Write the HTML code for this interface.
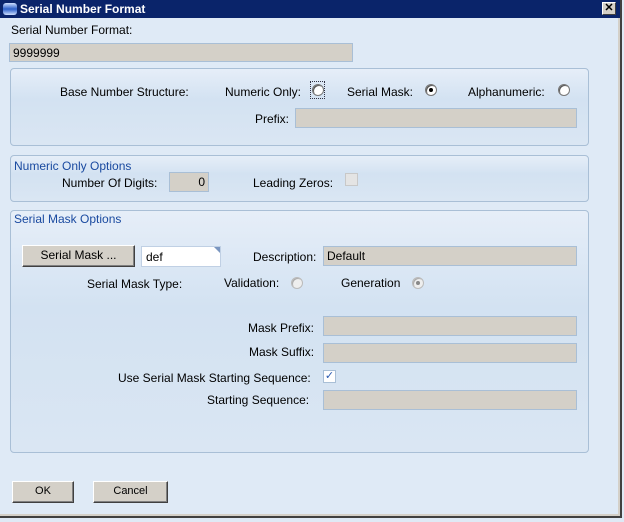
<!DOCTYPE html>
<html><head><style>
*{box-sizing:border-box;margin:0;padding:0}
body{width:624px;height:522px;overflow:hidden;background:#dfe9f5;font-family:"Liberation Sans",sans-serif;font-size:12px;color:#000;position:relative}
.a{position:absolute;white-space:nowrap}
.dlg{position:absolute;left:0;top:0;width:622px;height:518px;background:#dfeaf6;border-right:2px solid #404040;border-bottom:2px solid #404040;box-shadow:inset -2px -2px 0 #d4d0c8}
.title{position:absolute;left:0;top:0;width:620px;height:18px;background:#0a246a;color:#fff;font-weight:bold;font-size:12px;line-height:18px;padding-left:20px}
.inp{position:absolute;background:#d4d0c8;border:1px solid #a9bfd6;height:20px;line-height:18px;padding-left:3px}
.grp{position:absolute;border:1px solid #a9bfd6;border-radius:4px;background:linear-gradient(#e6eef8,#d3e2f2 40%,#dae6f3)}
.gt{color:#1a4aa0}
.rad{position:absolute;width:12px;height:12px;border-radius:50%;background:#fff;border:1px solid #777;box-shadow:inset 1px 1px 0 #555}
.btn{position:absolute;background:#d4d0c8;border:1px solid #fff;border-right-color:#404040;border-bottom-color:#404040;box-shadow:inset -1px -1px 0 #808080;text-align:center;line-height:19px}
</style></head><body>
<div class="dlg"></div>
<div class="title">Serial Number Format
<div class="a" style="left:3px;top:3px;width:14px;height:12px;border-radius:3px;background:linear-gradient(#cfe0ff,#2a5ec8 50%,#cfe0ff)"></div>
<div class="a" style="left:602px;top:2px;width:14px;height:13px;background:#d4d0c8;border:1px solid #fff;border-right-color:#404040;border-bottom-color:#404040;color:#000;font-size:11px;line-height:11px;text-align:center">✕</div>
</div>
<div class="a" style="left:11px;top:23px">Serial Number Format:</div>
<div class="inp" style="left:9px;top:43px;width:344px;height:19px">9999999</div>

<div class="grp" style="left:10px;top:68px;width:579px;height:78px"></div>
<div class="a" style="left:60px;top:85px">Base Number Structure:</div>
<div class="a" style="left:225px;top:85px">Numeric Only:</div>
<div class="a" style="left:310px;top:81px;width:15px;height:18px;border:1px dotted #334"></div>
<div class="rad" style="left:312px;top:84px"></div>
<div class="a" style="left:347px;top:85px">Serial Mask:</div>
<div class="rad" style="left:425px;top:84px"></div><div class="a" style="left:429px;top:88px;width:4px;height:4px;background:#000;border-radius:50%"></div>
<div class="a" style="left:468px;top:85px">Alphanumeric:</div>
<div class="rad" style="left:558px;top:84px"></div>
<div class="a" style="left:255px;top:112px">Prefix:</div>
<div class="inp" style="left:295px;top:108px;width:282px"></div>

<div class="grp" style="left:10px;top:155px;width:579px;height:47px"></div>
<div class="a gt" style="left:14px;top:159px">Numeric Only Options</div>
<div class="a" style="left:62px;top:176px">Number Of Digits:</div>
<div class="inp" style="left:169px;top:172px;width:40px;text-align:right;padding-right:3px">0</div>
<div class="a" style="left:253px;top:176px">Leading Zeros:</div>
<div class="a" style="left:345px;top:173px;width:13px;height:13px;border:1px solid #c8c8c8;background:#e4e4e4"></div>

<div class="grp" style="left:10px;top:210px;width:579px;height:243px"></div>
<div class="a gt" style="left:14px;top:212px">Serial Mask Options</div>
<div class="btn" style="left:22px;top:245px;width:113px;height:22px">Serial Mask ...</div>
<div class="a" style="left:141px;top:246px;width:80px;height:21px;background:#fff;border:1px solid #c0d0e4;padding-left:4px;line-height:20px">def</div>
<div class="a" style="left:214px;top:247px;width:0;height:0;border-left:6px solid transparent;border-top:6px solid #7a96c0"></div>
<div class="a" style="left:253px;top:250px">Description:</div>
<div class="inp" style="left:323px;top:246px;width:254px">Default</div>
<div class="a" style="left:87px;top:277px">Serial Mask Type:</div>
<div class="a" style="left:224px;top:276px">Validation:</div>
<div class="rad" style="left:291px;top:277px;border-color:#bbb;background:#eee;box-shadow:inset 1px 1px 0 #aaa"></div>
<div class="a" style="left:341px;top:276px">Generation</div>
<div class="rad" style="left:412px;top:277px;border-color:#bbb;background:#eee;box-shadow:inset 1px 1px 0 #aaa"></div><div class="a" style="left:416px;top:281px;width:4px;height:4px;background:#888;border-radius:50%"></div>
<div class="a" style="left:248px;top:321px">Mask Prefix:</div>
<div class="inp" style="left:323px;top:316px;width:254px"></div>
<div class="a" style="left:249px;top:345px">Mask Suffix:</div>
<div class="inp" style="left:323px;top:343px;width:254px"></div>
<div class="a" style="left:118px;top:371px">Use Serial Mask Starting Sequence:</div>
<div class="a" style="left:323px;top:370px;width:13px;height:13px;border:1px solid #a9bfd6;background:#fff;color:#2a5ab0;font-size:11px;line-height:11px;text-align:center">✓</div>
<div class="a" style="left:207px;top:393px">Starting Sequence:</div>
<div class="inp" style="left:323px;top:390px;width:254px"></div>

<div class="btn" style="left:12px;top:481px;width:62px;height:22px;font-size:11px">OK</div>
<div class="btn" style="left:93px;top:481px;width:75px;height:22px;font-size:11px">Cancel</div>
</body></html>
